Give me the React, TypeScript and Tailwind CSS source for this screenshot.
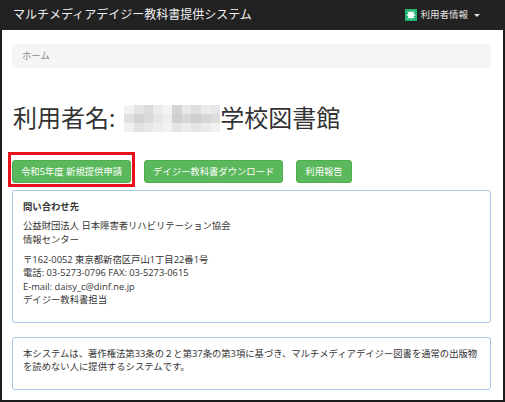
import React from "react";

const shades = [
  "#f2f2f2", "#e4e4e4", "#dcdcdc", "#ececec", "#f4f4f4", "#d4d4d4", "#e8e8e8", "#dedede", "#ececec", "#e6e6e6",
  "#e0e0e0", "#d2d2d2", "#dadada", "#e6e6e6", "#eeeeee", "#cfcfcf", "#d8d8d8", "#d0d0d0", "#d6d6d6", "#dcdcdc",
  "#f0f0f0", "#e2e2e2", "#e8e8e8", "#eeeeee", "#f2f2f2", "#e4e4e4", "#ececec", "#e4e4e4", "#eaeaea", "#f0f0f0",
];

const Blur = () => (
  <div className="grid grid-cols-[repeat(10,9.6px)] grid-rows-[repeat(3,9px)] ml-[9px]">
    {shades.map((c, i) => (
      <div key={i} style={{ backgroundColor: c }} />
    ))}
  </div>
);

const UserIcon = () => (
  <svg width="12" height="12" viewBox="0 0 12 12">
    <rect width="12" height="12" fill="#22b573" />
    <g fill="#ffffff">
      <circle cx="6" cy="6" r="2.6" />
      <path d="M6 0.8 L6.7 3.4 L9.7 2.3 L8.4 5 L11.2 6 L8.4 7 L9.7 9.7 L6.7 8.6 L6 11.2 L5.3 8.6 L2.3 9.7 L3.6 7 L0.8 6 L3.6 5 L2.3 2.3 L5.3 3.4 Z" />
    </g>
  </svg>
);

const GreenButton = ({ children, marked }: { children: React.ReactNode; marked?: boolean }) => (
  <div className="relative">
    <button className="h-[23px] px-[8px] rounded-[3px] bg-[#5cb85c] border border-[#4cae4c] text-white text-[9.33px] leading-[13px] whitespace-nowrap">
      {children}
    </button>
    {marked && (
      <div className="absolute -left-[4px] -top-[5px] -right-[4px] -bottom-[4px] border-[3px] border-[#e8101b]" />
    )}
  </div>
);

export default function App() {
  return (
    <div
      className="w-[505px] h-[402px] bg-[#1c1c1c] overflow-hidden text-[#333]"
      style={{ fontFamily: '"Open Sans", "Noto Sans CJK JP", sans-serif' }}
    >
      <div className="h-[30px] bg-[#222] flex items-center justify-between pl-[13px] pr-[25px]">
        <div className="text-[12px] text-[#f2f2f2] leading-none">マルチメディアデイジー教科書提供システム</div>
        <div className="flex items-center gap-[3px] text-[9.5px] text-[#e2e2e2]">
          <UserIcon />
          <span>利用者情報</span>
          <span className="ml-[3px] w-0 h-0 border-l-[3px] border-r-[3px] border-t-[3px] border-l-transparent border-r-transparent border-t-[#e2e2e2]" />
        </div>
      </div>

      <div className="mx-[2px] h-[370px] bg-white pl-[10px] pr-[12px] pt-[14px]">
        <div className="h-[24px] rounded-[3px] bg-[#f5f5f5] flex items-center px-[10px] text-[9.33px] text-[#888]">
          ホーム
        </div>

        <div className="mt-[33px] flex items-center h-[34px] text-[24px] leading-[34px]">
          <span className="pl-[1px]">利用者名:</span>
          <Blur />
          <span>学校図書館</span>
        </div>

        <div className="mt-[22px] flex gap-[13px]">
          <GreenButton marked>令和5年度 新規提供申請</GreenButton>
          <GreenButton>デイジー教科書ダウンロード</GreenButton>
          <GreenButton>利用報告</GreenButton>
        </div>

        <div className="mt-[7px] h-[133px] border border-[#a6c6e4] rounded-[3px] px-[10px] pt-[9px] text-[9.33px] leading-[13.33px]">
          <p className="font-bold mb-[6px]">問い合わせ先</p>
          <p className="mb-[7px]">
            公益財団法人 日本障害者リハビリテーション協会
            <br />
            情報センター
          </p>
          <p>
            〒162-0052 東京都新宿区戸山1丁目22番1号
            <br />
            電話: 03-5273-0796 FAX: 03-5273-0615
            <br />
            E-mail: daisy_c@dinf.ne.jp
            <br />
            デイジー教科書担当
          </p>
        </div>

        <div className="mt-[14px] h-[53px] border border-[#a6c6e4] rounded-[3px] px-[10px] pt-[9px] text-[9.33px] leading-[13.33px]">
          <p>
            <span className="whitespace-nowrap">本システムは、著作権法第33条の２と第37条の第3項に基づき、マルチメディアデイジー図書を通常の出版物</span>
            <br />
            を読めない人に提供するシステムです。
          </p>
        </div>
      </div>
    </div>
  );
}
